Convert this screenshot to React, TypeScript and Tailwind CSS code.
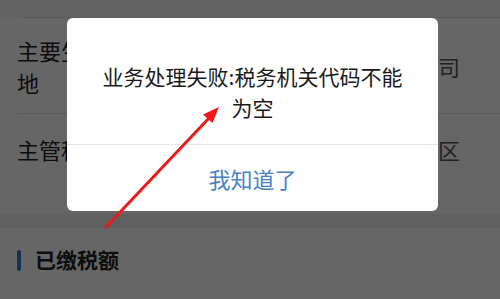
import React from 'react'

const font = { fontFamily: '"Noto Sans CJK SC", "Noto Sans", sans-serif' }

function Row({ label, value, height, top }: { label: string; value: string; height: string; top: string }) {
  return (
    <div className={`flex ${height} ${top} bg-white`}>
      <div className="w-[157px] pl-[17px] text-[22px] leading-[32px] text-[#222] shrink-0">{label}</div>
      <div className="flex-1 pr-[40px] text-right text-[22px] leading-[32px] text-[#555] whitespace-nowrap">
        {value}
      </div>
    </div>
  )
}

export default function App() {
  return (
    <div className="relative w-[500px] h-[299px] overflow-hidden bg-white" style={font}>
      {/* page under the mask */}
      <div className="flex flex-col">
        <div className="h-[17px] bg-[#f5f5f5]"></div>
        <div className="ml-[22px] border-t border-[#e2e2e2]"></div>
        <div className="flex h-[95px] items-center bg-white">
          <div className="w-[157px] pl-[17px] text-[22px] leading-[32px] text-[#222] shrink-0">
            主要生产经营地
          </div>
          <div className="flex-1 pr-[40px] text-right text-[22px] leading-[32px] text-[#555] whitespace-nowrap">
            某某贸易有限公司
          </div>
        </div>
        <div className="ml-[17px] border-t border-[#e2e2e2]"></div>
        <Row label="主管税务机关" value="上海市浦东新区" height="h-[100px]" top="pt-[19px]" />
        <div className="h-[14px] bg-[#f0f0f0]"></div>
        <div className="flex items-center h-[64px] pl-[17px] gap-[14px] bg-white">
          <div className="w-[4px] h-[21px] rounded-full bg-[#3a78d8]"></div>
          <div className="text-[21px] font-bold text-[#222]">已缴税额</div>
        </div>
      </div>

      {/* mask */}
      <div className="absolute inset-0 bg-black/60"></div>

      {/* dialog */}
      <div className="absolute left-[67px] top-[18px] w-[371px] h-[193px] bg-white rounded-[6px] flex flex-col">
        <div className="px-[28px] pt-[43px] pb-[21px] text-center text-[21px] leading-[31px] text-[#1a1a1a]">
          业务处理失败:税务机关代码不能为空
        </div>
        <div className="border-t border-[#e6e6e6]"></div>
        <div className="flex-1 flex items-center justify-center text-[22px] text-[#4a80c8]">我知道了</div>
      </div>

      {/* red arrow annotation */}
      <svg className="absolute inset-0" width="500" height="299" viewBox="0 0 500 299">
        <line x1="106" y1="227" x2="210" y2="117" stroke="#f01818" strokeWidth="3" strokeLinecap="round" />
        <polygon points="219,107 203,114.5 212.5,123" fill="#f01818" />
      </svg>
    </div>
  )
}
